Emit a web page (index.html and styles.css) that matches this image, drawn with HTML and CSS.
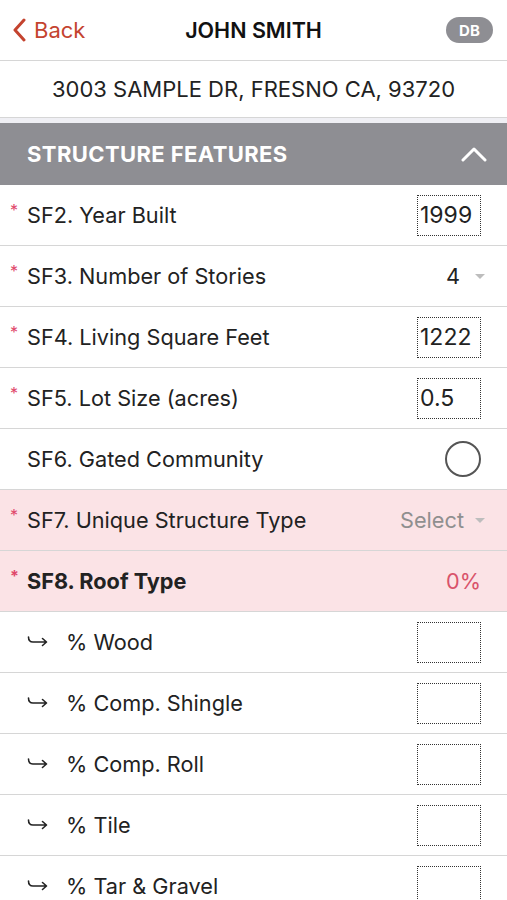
FILE: index.html
```html
<!DOCTYPE html>
<html lang="en">
<head>
    <meta charset="UTF-8">
    <meta name="viewport" content="width=device-width, initial-scale=1.0">
    <title>John Smith</title>
    <link rel="stylesheet" href="styles.css">
</head>
<body>

    <div class="navbar">
        <a href="#" class="back">
            <svg width="14" height="24" viewBox="0 0 14 24"><path d="M12 2 L3 12 L12 22" fill="none" stroke="#c4432f" stroke-width="3" stroke-linecap="round" stroke-linejoin="round"/></svg>
            <span>Back</span>
        </a>
        <h1>JOHN SMITH</h1>
        <span class="badge">DB</span>
    </div>

    <div class="address">3003 SAMPLE DR, FRESNO CA, 93720</div>

    <div class="gap"></div>

    <div class="section-head">
        <span>STRUCTURE FEATURES</span>
        <svg width="26" height="16" viewBox="0 0 26 16"><path d="M2 14 L13 3 L24 14" fill="none" stroke="#fff" stroke-width="3" stroke-linecap="round" stroke-linejoin="round"/></svg>
    </div>

    <div class="row">
        <span class="label"><i class="req">*</i>SF2. Year Built</span>
        <span class="box">1999</span>
    </div>
    <div class="row">
        <span class="label"><i class="req">*</i>SF3. Number of Stories</span>
        <span class="select"><b class="value">4</b><i class="caret"></i></span>
    </div>
    <div class="row">
        <span class="label"><i class="req">*</i>SF4. Living Square Feet</span>
        <span class="box">1222</span>
    </div>
    <div class="row">
        <span class="label"><i class="req">*</i>SF5. Lot Size (acres)</span>
        <span class="box">0.5</span>
    </div>
    <div class="row">
        <span class="label"><i class="req"></i>SF6. Gated Community</span>
        <span class="radio"></span>
    </div>
    <div class="row error">
        <span class="label"><i class="req">*</i>SF7. Unique Structure Type</span>
        <span class="select muted"><b>Select</b><i class="caret"></i></span>
    </div>
    <div class="row error">
        <span class="label strong"><i class="req">*</i>SF8. Roof Type</span>
        <span class="percent">0%</span>
    </div>
    <div class="row">
        <span class="label sub"><svg class="hook" width="22" height="12" viewBox="0 0 22 12"><path d="M1.5 1 Q1.5 6 6 6 L19 6 M15.5 2.5 L19.5 6 L15.5 9.5" fill="none" stroke="#222" stroke-width="1.6" stroke-linecap="round" stroke-linejoin="round"/></svg>% Wood</span>
        <span class="box"></span>
    </div>
    <div class="row">
        <span class="label sub"><svg class="hook" width="22" height="12" viewBox="0 0 22 12"><path d="M1.5 1 Q1.5 6 6 6 L19 6 M15.5 2.5 L19.5 6 L15.5 9.5" fill="none" stroke="#222" stroke-width="1.6" stroke-linecap="round" stroke-linejoin="round"/></svg>% Comp. Shingle</span>
        <span class="box"></span>
    </div>
    <div class="row">
        <span class="label sub"><svg class="hook" width="22" height="12" viewBox="0 0 22 12"><path d="M1.5 1 Q1.5 6 6 6 L19 6 M15.5 2.5 L19.5 6 L15.5 9.5" fill="none" stroke="#222" stroke-width="1.6" stroke-linecap="round" stroke-linejoin="round"/></svg>% Comp. Roll</span>
        <span class="box"></span>
    </div>
    <div class="row">
        <span class="label sub"><svg class="hook" width="22" height="12" viewBox="0 0 22 12"><path d="M1.5 1 Q1.5 6 6 6 L19 6 M15.5 2.5 L19.5 6 L15.5 9.5" fill="none" stroke="#222" stroke-width="1.6" stroke-linecap="round" stroke-linejoin="round"/></svg>% Tile</span>
        <span class="box"></span>
    </div>
    <div class="row">
        <span class="label sub"><svg class="hook" width="22" height="12" viewBox="0 0 22 12"><path d="M1.5 1 Q1.5 6 6 6 L19 6 M15.5 2.5 L19.5 6 L15.5 9.5" fill="none" stroke="#222" stroke-width="1.6" stroke-linecap="round" stroke-linejoin="round"/></svg>% Tar &amp; Gravel</span>
        <span class="box"></span>
    </div>

</body>
</html>
```

FILE: styles.css
```css
* {
    margin: 0;
    padding: 0;
    box-sizing: border-box;
    font-family: 'Inter', 'Liberation Sans', sans-serif;
}

body {
    background: #fff;
    color: #222;
    width: 507px;
    overflow: hidden;
}

.navbar {
    height: 61px;
    display: flex;
    align-items: center;
    justify-content: space-between;
    padding: 0 14px 0 12px;
    border-bottom: 1px solid #d6d6d6;
    position: relative;
}

.back {
    display: flex;
    align-items: center;
    gap: 8px;
    color: #c4432f;
    text-decoration: none;
    font-size: 22px;
}

.navbar h1 {
    position: absolute;
    left: 0;
    right: 0;
    text-align: center;
    font-size: 21.5px;
    font-weight: 600;
    color: #111;
    pointer-events: none;
}

.badge {
    background: #8e8e93;
    color: #fff;
    font-size: 15px;
    font-weight: 700;
    border-radius: 13px;
    width: 47px;
    height: 26px;
    display: flex;
    align-items: center;
    justify-content: center;
}

.address {
    height: 57px;
    display: flex;
    align-items: center;
    justify-content: center;
    font-size: 22px;
    border-bottom: 1px solid #d6d6d6;
}

.gap {
    height: 5px;
    background: #efeff4;
}

.section-head {
    height: 62px;
    background: #8e8e93;
    color: #fff;
    display: flex;
    align-items: center;
    justify-content: space-between;
    padding: 0 20px 0 27px;
    font-size: 22px;
    font-weight: 700;
    letter-spacing: 0.4px;
}

.row {
    height: 61px;
    display: flex;
    align-items: center;
    justify-content: space-between;
    padding: 0 26px 0 10px;
    border-bottom: 1px solid #d6d6d6;
    font-size: 21.7px;
}

.row.error {
    background: #fbe3e6;
}

.label {
    display: flex;
    align-items: center;
}

.label.strong {
    font-weight: 700;
}

.req {
    font-style: normal;
    color: #e0476a;
    width: 17px;
    font-size: 16px;
    align-self: flex-start;
    margin-top: -2px;
}

.hook {
    margin-left: 17px;
    margin-right: 17px;
}

.box {
    width: 64px;
    height: 41px;
    border: 1px dotted #333;
    display: flex;
    align-items: center;
    padding-left: 2px;
    font-size: 23px;
}

.select {
    display: flex;
    align-items: center;
    gap: 11px;
    margin-right: -4px;
}

.select b {
    font-weight: 400;
}

.select .value {
    width: 18px;
}

.select.muted {
    color: #8f8f8f;
}

.caret {
    width: 0;
    height: 0;
    border-left: 5.5px solid transparent;
    border-right: 5.5px solid transparent;
    border-top: 5.5px solid #bdbdbd;
}

.radio {
    width: 36px;
    height: 36px;
    border: 2px solid #555;
    border-radius: 50%;
}

.percent {
    color: #d9536b;
}
```
